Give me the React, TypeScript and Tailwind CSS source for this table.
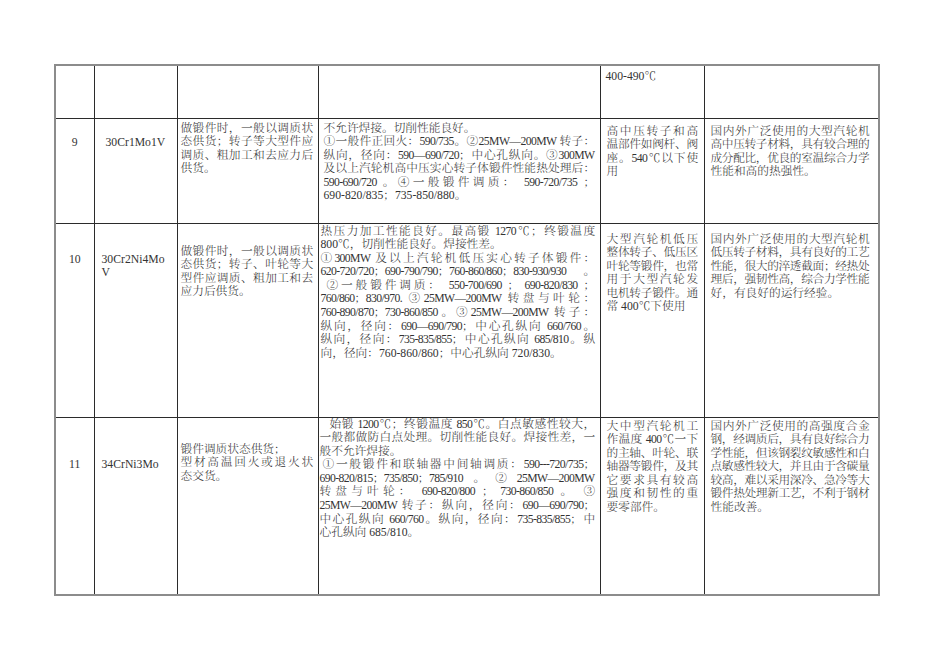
import type { ReactNode } from 'react';

type Line = string | { t: string; c: string };
type Para = Line[];

interface CellProps {
  className?: string;
  paras?: Para[];
}

// each paragraph: all lines but the last are justified, like the Word source
function Cell({ className = '', paras = [] }: CellProps) {
  const out: ReactNode[] = [];
  paras.forEach((para, pi) => {
    para.forEach((line, li) => {
      const text = typeof line === 'string' ? line : line.t;
      const extra = typeof line === 'string' ? '' : line.c;
      const justify = li < para.length - 1;
      out.push(
        <div
          key={`${pi}-${li}`}
          className={`${justify ? 'text-justify [text-align-last:justify] tracking-[-0.6px]' : 'whitespace-nowrap'} ${extra}`}
        >
          {text}
        </div>,
      );
    });
  });
  return <td className={`border border-[#2b2b2b] p-0 align-top ${className}`}>{out}</td>;
}

export default function App() {
  return (
    <div className="min-h-[672px] w-[950px] bg-white pl-[54px] pt-[64px] font-['Liberation_Serif','Noto_Serif_CJK_SC','Noto_Sans_CJK_SC',serif] text-[11.7px] font-light leading-[13.6px] text-[#333]">
      <table className="w-[824px] table-fixed border-collapse border-2 border-[#8c8c8c]">
        <colgroup>
          <col className="w-[39px]" />
          <col className="w-[83px]" />
          <col className="w-[141px]" />
          <col className="w-[282px]" />
          <col className="w-[104px]" />
          <col className="w-[175px]" />
        </colgroup>
        <tbody>
          {/* carried over from the previous page */}
          <tr className="h-[53px]">
            <Cell />
            <Cell />
            <Cell />
            <Cell />
            <Cell className="pl-[5px] pt-[4px]" paras={[['400-490℃']]} />
            <Cell />
          </tr>

          {/* 9 */}
          <tr className="h-[105px]">
            <Cell className="pt-[17px] text-center" paras={[['9']]} />
            <Cell className="pl-[11px] pt-[17px]" paras={[['30Cr1Mo1V']]} />
            <Cell
              className="pl-[3px] pr-[5px] pt-[3px]"
              paras={[['做锻件时，一般以调质状', '态供货；转子等大型件应', '调质、粗加工和去应力后', '供货。']]}
            />
            <Cell
              className="pl-[5px] pr-[5px] pt-[3px]"
              paras={[
                ['不允许焊接。切削性能良好。'],
                [
                  '①一般件正回火：590/735。②25MW—200MW 转子：',
                  '纵向，径向：590—690/720；中心孔纵向。③300MW',
                  '及以上汽轮机高中压实心转子体锻件性能热处理后：',
                  '590-690/720 。④一般锻件调质： 590-720/735 ；',
                  '690-820/835；735-850/880。',
                ],
              ]}
            />
            <Cell
              className="pl-[6px] pr-[6px] pt-[6px]"
              paras={[['高中压转子和高', '温部件如阀杆、阀', '座。540℃以下使', '用']]}
            />
            <Cell
              className="pl-[6px] pr-[9px] pt-[6px]"
              paras={[
                ['国内外广泛使用的大型汽轮机', '高中压转子材料，具有较合理的', '成分配比，优良的室温综合力学', '性能和高的热强性。'],
              ]}
            />
          </tr>

          {/* 10 */}
          <tr className="h-[194px]">
            <Cell className="pt-[29px] text-center" paras={[['10']]} />
            <Cell className="pl-[7px] pt-[29px]" paras={[['30Cr2Ni4Mo'], ['V']]} />
            <Cell
              className="pl-[3px] pr-[5px] pt-[21px]"
              paras={[['做锻件时，一般以调质状', '态供货；转子、叶轮等大', '型件应调质、粗加工和去', '应力后供货。']]}
            />
            <Cell
              className="pl-[2px] pr-[5px] pt-[1px]"
              paras={[
                ['热压力加工性能良好。最高锻 1270℃；终锻温度', '800℃，切削性能良好。焊接性差。'],
                [
                  '①300MW 及以上汽轮机低压实心转子体锻件：',
                  '620-720/720；690-790/790；760-860/860；830-930/930。',
                  { t: '②一般锻件调质： 550-700/690 ； 690-820/830 ；', c: 'pl-[6px]' },
                  '760/860；830/970. ③25MW—200MW 转盘与叶轮：',
                  '760-890/870；730-860/850。③25MW—200MW 转子：',
                  '纵向，径向：690—690/790；中心孔纵向 660/760。',
                  '纵向，径向：735-835/855；中心孔纵向 685/810。纵',
                  '向，径向：760-860/860；中心孔纵向 720/830。',
                ],
              ]}
            />
            <Cell
              className="pl-[6px] pr-[6px] pt-[9px]"
              paras={[['大型汽轮机低压', '整体转子、低压区', '叶轮等锻件，也常', '用于大型汽轮发', '电机转子锻件。通', '常 400℃下使用']]}
            />
            <Cell
              className="pl-[6px] pr-[9px] pt-[9px]"
              paras={[
                [
                  '国内外广泛使用的大型汽轮机',
                  '低压转子材料，具有良好的工艺',
                  '性能，很大的淬透截面；经热处',
                  '理后，强韧性高，综合力学性能',
                  '好，有良好的运行经验。',
                ],
              ]}
            />
          </tr>

          {/* 11 */}
          <tr className="h-[178px]">
            <Cell className="pt-[40px] text-center" paras={[['11']]} />
            <Cell className="pl-[7px] pt-[40px]" paras={[['34CrNi3Mo']]} />
            <Cell
              className="pl-[3px] pr-[5px] pt-[25px]"
              paras={[['锻件调质状态供货；'], ['型材高温回火或退火状', '态交货。']]}
            />
            <Cell
              className="pl-[1px] pr-[5px] pt-[0px]"
              paras={[
                [
                  { t: '始锻 1200℃；终锻温度 850℃。白点敏感性较大，', c: 'pl-[10px]' },
                  '一般都做防白点处理。切削性能良好。焊接性差，一',
                  '般不允许焊接。',
                ],
                [
                  { t: '①一般锻件和联轴器中间轴调质：590---720/735；', c: 'pl-[3px]' },
                  '690-820/815；735/850；785/910。②25MW—200MW',
                  '转盘与叶轮： 690-820/800 ； 730-860/850 。 ③',
                  '25MW—200MW 转子：纵向，径向：690—690/790；',
                  '中心孔纵向 660/760。纵向，径向：735-835/855；中',
                  '心孔纵向 685/810。',
                ],
              ]}
            />
            <Cell
              className="pl-[6px] pr-[6px] pt-[2px]"
              paras={[['大中型汽轮机工', '作温度 400℃一下', '的主轴、叶轮、联', '轴器等锻件，及其', '它要求具有较高', '强度和韧性的重', '要零部件。']]}
            />
            <Cell
              className="pl-[6px] pr-[9px] pt-[2px]"
              paras={[
                [
                  '国内外广泛使用的高强度合金',
                  '钢，经调质后，具有良好综合力',
                  '学性能，但该钢裂纹敏感性和白',
                  '点敏感性较大，并且由于含碳量',
                  '较高，难以采用深冷、急冷等大',
                  '锻件热处理新工艺，不利于钢材',
                  '性能改善。',
                ],
              ]}
            />
          </tr>
        </tbody>
      </table>
    </div>
  );
}
